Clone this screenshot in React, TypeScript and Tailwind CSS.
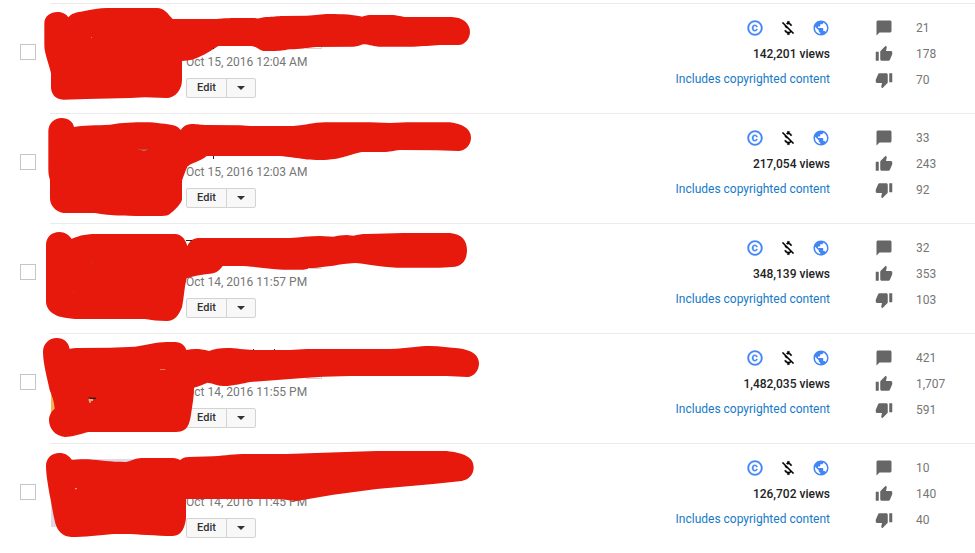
import { MdChatBubble, MdCopyright, MdMoneyOff, MdPublic, MdThumbDown, MdThumbUp } from 'react-icons/md';

interface Fragment {
  x: number;
  y: number;
  w: number;
  h: number;
  fill: string;
}

interface Video {
  id: string;
  date: string;
  views: string;
  comments: string;
  likes: string;
  dislikes: string;
  thumb: string;
  scribble: string;
  // bits of the title and thumbnail that stay visible around the marker
  fragments: Fragment[];
}

const videos: Video[] = [
  {
    id: 'v1',
    date: 'Oct 15, 2016 12:04 AM',
    views: '142,201',
    comments: '21',
    likes: '178',
    dislikes: '70',
    thumb: 'bg-white',
    scribble:
      'M133 70 C133 48 152 36 172 36 C190 36 200 44 205 52 C215 40 230 37 250 34 C275 28 300 24 320 24 L470 24 C495 24 503 42 518 57 L650 57 C680 53 730 54 765 54 C775 58 785 51 800 51 C820 51 830 48 850 48 L920 47 C950 46 960 42 990 42 C1030 42 1060 44 1087 50 C1095 47 1100 45 1120 45 L1170 45 C1195 45 1205 51 1220 51 L1355 51 C1390 52 1410 72 1410 95 C1410 115 1395 135 1375 135 L1320 135 C1290 138 1270 138 1240 140 L1135 140 C1115 138 1105 133 1090 133 C1080 135 1075 140 1060 140 L950 141 C920 144 900 147 870 148 C850 151 840 153 820 153 L790 153 C775 150 775 142 755 138 L655 138 C615 162 590 182 546 183 L546 240 C546 270 525 294 500 294 L435 292 L390 294 L260 297 L190 299 C165 299 153 280 153 262 L153 220 C145 185 133 160 133 135 Z',
    fragments: [
      { x: 639, y: 144, w: 3, h: 3, fill: '#222' },
      { x: 918, y: 144, w: 48, h: 3, fill: '#d3d3d3' },
      { x: 963, y: 141, w: 3, h: 3, fill: '#d3d3d3' },
      { x: 273, y: 111, w: 3, h: 3, fill: '#ee7a68' },
    ],
  },
  {
    id: 'v2',
    date: 'Oct 15, 2016 12:03 AM',
    views: '217,054',
    comments: '33',
    likes: '243',
    dislikes: '92',
    thumb: 'bg-white',
    scribble:
      'M145 65 C145 40 162 24 185 24 C205 24 220 36 222 51 C245 46 290 46 330 44 C370 38 400 37 435 37 C470 37 500 43 520 46 C530 48 537 54 542 60 C550 48 560 42 575 42 C595 42 600 45 620 45 L720 46 L750 48 L880 48 C920 46 940 37 975 37 L1110 37 L1170 39 L1220 37 L1350 37 C1385 42 1413 55 1413 83 C1413 105 1395 123 1375 123 L1310 121 L1200 120 C1180 122 1170 126 1150 126 L1085 126 C1050 132 1030 149 960 150 C900 150 880 138 820 138 L620 138 C600 155 575 158 562 170 C555 185 550 200 546 212 L546 270 C538 290 515 308 505 315 C495 319 480 318 460 318 C390 318 330 318 285 309 L190 309 C165 305 150 285 150 265 L150 210 C147 200 145 190 145 180 Z',
    fragments: [
      { x: 639, y: 138, w: 3, h: 9, fill: '#222' },
      { x: 414, y: 117, w: 30, h: 3, fill: '#c9463a' },
      { x: 426, y: 120, w: 12, h: 3, fill: '#c0665a' },
      { x: 231, y: 225, w: 4, h: 3, fill: '#c32a1e' },
    ],
  },
  {
    id: 'v3',
    date: 'Oct 14, 2016 11:57 PM',
    views: '348,139',
    comments: '32',
    likes: '353',
    dislikes: '103',
    thumb: 'bg-white',
    scribble:
      'M138 75 C138 52 155 36 178 36 C195 36 207 45 215 57 C230 50 250 42 290 42 L525 42 C545 43 556 58 562 78 C570 62 580 54 600 54 L870 54 C900 52 930 48 960 48 L1000 50 C1015 48 1025 45 1040 45 L1060 47 C1075 44 1085 42 1100 42 L1210 39 L1350 39 C1385 42 1401 62 1401 90 C1401 118 1388 141 1356 141 L1320 143 L1190 143 C1140 142 1090 129 1065 129 C1040 130 1020 134 1000 137 C960 142 940 143 910 149 L850 149 C800 147 760 138 715 138 L668 138 C655 155 648 160 630 161 C605 164 580 168 560 175 C552 205 552 235 546 262 C535 287 525 303 500 303 C475 303 455 300 435 297 L225 297 C205 294 195 293 180 290 C155 283 138 265 138 245 Z',
    fragments: [
      { x: 558, y: 60, w: 18, h: 3, fill: '#222' },
      { x: 924, y: 144, w: 42, h: 3, fill: '#d3d3d3' },
      { x: 276, y: 123, w: 3, h: 6, fill: '#b83a2e' },
      { x: 219, y: 213, w: 3, h: 3, fill: '#c9463a' },
    ],
  },
  {
    id: 'v4',
    date: 'Oct 14, 2016 11:55 PM',
    views: '1,482,035',
    comments: '421',
    likes: '1,707',
    dislikes: '591',
    thumb: 'bg-[#f2b552]',
    scribble:
      'M129 65 C129 42 147 24 170 24 C192 24 206 38 209 57 C215 54 225 54 240 54 L330 53 L405 50 C440 45 470 36 500 36 L525 36 C545 37 555 48 559 60 C580 56 600 56 627 63 C650 52 690 52 720 57 L760 60 L870 60 L920 57 L1170 57 C1220 55 1260 48 1290 48 C1320 48 1350 53 1375 55 C1415 60 1437 75 1437 100 C1437 122 1422 141 1402 141 C1380 141 1360 138 1340 138 L1050 138 L970 140 L900 145 L750 156 C730 160 700 168 672 168 C655 168 640 160 622 158 C610 163 600 168 582 173 C582 200 578 220 575 240 C570 270 570 306 528 306 L265 306 C240 312 215 321 195 321 C165 318 147 295 147 270 C147 255 155 243 164 236 C163 215 155 195 149 180 C142 145 129 100 129 65 Z',
    fragments: [
      { x: 759, y: 57, w: 3, h: 3, fill: '#222' },
      { x: 822, y: 57, w: 3, h: 3, fill: '#222' },
      { x: 918, y: 144, w: 48, h: 3, fill: '#d3d3d3' },
      { x: 963, y: 141, w: 3, h: 3, fill: '#d3d3d3' },
      { x: 264, y: 201, w: 9, h: 3, fill: '#8a1f14' },
      { x: 270, y: 203, w: 18, h: 4, fill: '#222' },
      { x: 266, y: 207, w: 13, h: 6, fill: '#f2a878' },
      { x: 267, y: 213, w: 6, h: 5, fill: '#f2a878' },
      { x: 480, y: 117, w: 16, h: 3, fill: '#ef7a5a' },
    ],
  },
  {
    id: 'v5',
    date: 'Oct 14, 2016 11:45 PM',
    views: '126,702',
    comments: '10',
    likes: '140',
    dislikes: '40',
    thumb: 'bg-[#e0d8e2]',
    scribble:
      'M138 78 C138 55 155 39 178 39 C195 39 207 47 216 60 C235 57 250 57 265 58 C300 61 330 66 378 66 C395 63 405 54 425 54 L518 54 C530 55 535 58 541 60 C548 55 550 52 565 51 L640 49 C680 46 700 42 740 42 L860 42 L1060 35 L1130 33 L1340 33 C1390 39 1421 50 1421 82 C1421 105 1405 120 1385 123 L1300 132 L1130 147 L1000 164 L890 183 C860 181 850 177 820 177 L558 177 L558 235 C555 262 545 288 518 288 C470 288 410 282 378 282 L340 282 C300 286 250 291 215 291 C185 291 172 270 166 250 C158 220 155 190 149 165 C145 140 138 105 138 78 Z',
    fragments: [
      { x: 225, y: 144, w: 6, h: 3, fill: '#f09080' },
      { x: 225, y: 147, w: 3, h: 3, fill: '#ec5a48' },
    ],
  },
];

function Marker({ video }: { video: Video }) {
  return (
    <svg
      className="pointer-events-none absolute top-0 left-0 h-[110px] w-[500px]"
      viewBox="0 9 1500 330"
      aria-hidden="true"
    >
      <path d={video.scribble} fill="#e7190d" />
      {video.fragments.map((f, i) => (
        <rect key={i} x={f.x} y={f.y} width={f.w} height={f.h} fill={f.fill} />
      ))}
    </svg>
  );
}

function EditButtons() {
  return (
    <div className="flex h-5">
      <button
        type="button"
        className="w-[41px] rounded-l-xs border border-[#d3d3d3] bg-[#f8f8f8] text-[11px] leading-4 font-medium text-[#333]"
      >
        Edit
      </button>
      <button
        type="button"
        aria-label="More actions"
        className="-ml-px flex w-[30px] items-center justify-center rounded-r-xs border border-[#d3d3d3] bg-[#f8f8f8]"
      >
        <svg className="h-1 w-2" viewBox="0 0 8 4" fill="#333">
          <path d="M0 0h8L4 4z" />
        </svg>
      </button>
    </div>
  );
}

function VideoRow({ video }: { video: Video }) {
  return (
    <li className="relative flex h-[110px]">
      <div className="w-[50px] shrink-0 pt-[41px] pl-5">
        <input
          type="checkbox"
          aria-label={`Select video from ${video.date}`}
          className="block size-4 appearance-none border border-[#c6c6c6] bg-white"
        />
      </div>

      <div className="flex flex-1 border-t border-[#ebebeb] pl-px">
        <div className={`mt-[15px] h-[68px] w-[120px] shrink-0 ${video.thumb}`} />

        <div className="flex flex-1 flex-col pt-[50px] pl-[15px]">
          <span className="h-6 text-[12px] leading-4 text-[#767676]">{video.date}</span>
          <EditButtons />
        </div>

        {/* Status icons and views */}
        <div className="flex w-[200px] flex-col items-end pt-[15px] text-[12px]">
          <div className="flex h-[26px] gap-[15px] text-[18px] text-[#4285f4]">
            <MdCopyright className="[&>path:first-child]:stroke-none" strokeWidth={0.5} />
            <MdMoneyOff className="text-black [&>path:first-child]:stroke-none" strokeWidth={0.3} />
            <MdPublic />
          </div>
          <span className="h-[26px] leading-[18px] font-medium text-[#222]">{video.views} views</span>
          <a href="#copyright" className="leading-4 text-[#167ac6]">
            Includes copyrighted content
          </a>
        </div>

        {/* Engagement */}
        <div className="flex w-[145px] flex-col gap-2 pt-[15px] pl-[45px] text-[12px] leading-[18px] text-[#767676]">
          <div className="flex gap-[23px]">
            <MdChatBubble className="size-[18px] text-[#666]" />
            <span>{video.comments}</span>
          </div>
          <div className="flex gap-[23px]">
            <MdThumbUp className="size-[18px] text-[#666]" />
            <span>{video.likes}</span>
          </div>
          <div className="flex gap-[23px]">
            <MdThumbDown className="size-[18px] text-[#666]" />
            <span>{video.dislikes}</span>
          </div>
        </div>
      </div>

      <Marker video={video} />
    </li>
  );
}

export default function App() {
  return (
    <main className="bg-white pt-[3px] font-['Roboto',sans-serif]">
      <ul>
        {videos.map((video) => (
          <VideoRow key={video.id} video={video} />
        ))}
      </ul>
    </main>
  );
}
